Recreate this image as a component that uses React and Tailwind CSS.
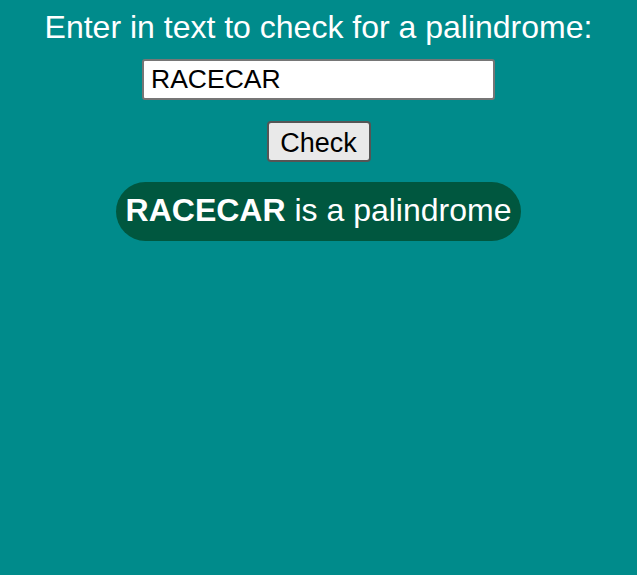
import { useState } from "react";

export default function App() {
  const [text, setText] = useState("RACECAR");
  const [result, setResult] = useState("RACECAR");

  const check = () => setResult(text);
  const clean = result.toLowerCase().replace(/[^a-z0-9]/g, "");
  const isPal = clean === clean.split("").reverse().join("");

  return (
    <div
      className="min-h-[575px] bg-[#008b8b] flex flex-col items-center pt-[9px] text-white"
      style={{ fontFamily: '"Liberation Sans", Arial, sans-serif' }}
    >
      <h1 className="text-[32px] leading-[36.8px]">
        Enter in text to check for a palindrome:
      </h1>

      <input
        type="text"
        value={text}
        onChange={(e) => setText(e.target.value)}
        className="mt-[13px] w-[353px] h-[41px] px-[7px] text-[26.5px] text-black bg-white border-2 border-[#767676] rounded-[3px] outline-none"
      />

      <button
        onClick={check}
        className="mt-[21px] w-[104px] h-[41px] text-[27px] text-black bg-[#e9e9e9] border-2 border-[#555555] rounded-[4px]"
      >
        Check
      </button>

      <div className="mt-[20px] bg-[#00573f] rounded-[30px] px-[10px] pt-[10px] pb-[12px] text-[32px] leading-[36.8px]">
        <span className="font-bold">{result}</span>{" "}
        {isPal ? "is a palindrome" : "is not a palindrome"}
      </div>
    </div>
  );
}
